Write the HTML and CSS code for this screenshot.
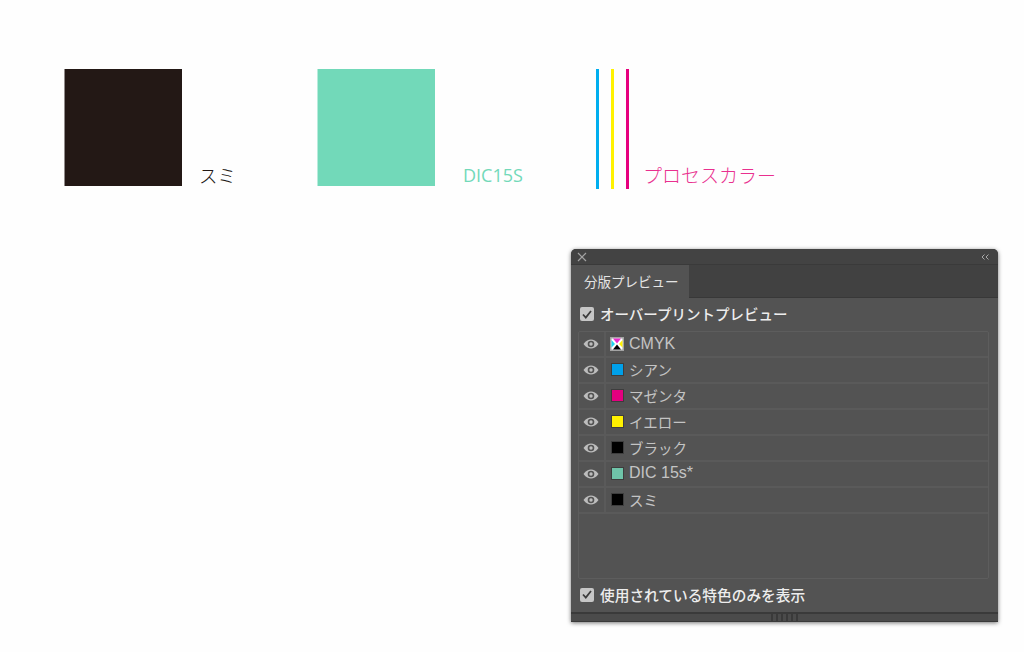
FILE: index.html
```html
<!DOCTYPE html>
<html lang="ja">
<head>
    <meta charset="UTF-8">
    <title>分版プレビュー</title>
    <link rel="stylesheet" href="styles.css">
</head>
<body>
    <div class="artboard">
        <div class="sample sample-sumi">
            <div class="square square-sumi"></div>
            <span class="sample-label label-sumi">スミ</span>
        </div>
        <div class="sample sample-dic">
            <div class="square square-dic"></div>
            <span class="sample-label label-dic">DIC15S</span>
        </div>
        <div class="sample sample-process">
            <div class="lines">
                <div class="line line-c"></div>
                <div class="line line-y"></div>
                <div class="line line-m"></div>
            </div>
            <span class="sample-label label-process">プロセスカラー</span>
        </div>
    </div>

    <div class="panel">
        <div class="title-bar">
            <svg class="close-icon" width="10" height="10" viewBox="0 0 10 10"><path d="M1 1l8 8M9 1l-8 8" stroke="#a2a2a2" stroke-width="1.200" fill="none"/></svg>
            <svg class="collapse-icon" width="8" height="6" viewBox="0 0 8 6"><path d="M3.500.5L1 3l2.500 2.500M7.500.5L5 3l2.500 2.500" stroke="#a8a8a8" stroke-width="1" fill="none"/></svg>
        </div>
        <div class="tab-bar">
            <div class="tab">分版プレビュー</div>
        </div>
        <div class="panel-body">
            <label class="check-row">
                <span class="checkbox"><svg width="10" height="9" viewBox="0 0 10 9"><path d="M1 4.500l2.800 3L9 1" stroke="#3c3c3c" stroke-width="1.800" fill="none"/></svg></span>
                <span class="check-text">オーバープリントプレビュー</span>
            </label>
            <div class="plate-list">
                <div class="plate-row">
                    <div class="eye-cell"><svg class="eye" width="16" height="10" viewBox="0 0 16 10"><path d="M.5 5C3 1.500 5.500.5 8 .5s5 1 7.500 4.500C13 8.500 10.500 9.500 8 9.500S3 8.500.5 5z" fill="#bdbdbd"/><circle cx="8" cy="5" r="3.300" fill="#535353"/><circle cx="8" cy="5" r="1.700" fill="#bdbdbd"/></svg></div>
                    <div class="plate-name plate-name-latin plate-name-cmyk">
                        <svg class="cmyk-icon" width="14" height="14" viewBox="0 0 14 14"><rect width="14" height="14" fill="#a3a3a3"/><rect x="1.500" y="1.500" width="11" height="11" fill="#fff"/><path d="M3 1.500h8L7 6.500z" fill="#ec2bd0"/><path d="M1.500 3v7.500L5 7z" fill="#1fd6ef"/><path d="M12.500 3v7.500L9 7z" fill="#fff200"/><path d="M3 12.500h8L7 7.500z" fill="#000"/></svg>
                        CMYK
                    </div>
                </div>
                <div class="plate-row">
                    <div class="eye-cell"><svg class="eye" width="16" height="10" viewBox="0 0 16 10"><path d="M.5 5C3 1.500 5.500.5 8 .5s5 1 7.500 4.500C13 8.500 10.500 9.500 8 9.500S3 8.500.5 5z" fill="#bdbdbd"/><circle cx="8" cy="5" r="3.300" fill="#535353"/><circle cx="8" cy="5" r="1.700" fill="#bdbdbd"/></svg></div>
                    <div class="plate-name"><span class="chip chip-c"></span>シアン</div>
                </div>
                <div class="plate-row">
                    <div class="eye-cell"><svg class="eye" width="16" height="10" viewBox="0 0 16 10"><path d="M.5 5C3 1.500 5.500.5 8 .5s5 1 7.500 4.500C13 8.500 10.500 9.500 8 9.500S3 8.500.5 5z" fill="#bdbdbd"/><circle cx="8" cy="5" r="3.300" fill="#535353"/><circle cx="8" cy="5" r="1.700" fill="#bdbdbd"/></svg></div>
                    <div class="plate-name"><span class="chip chip-m"></span>マゼンタ</div>
                </div>
                <div class="plate-row">
                    <div class="eye-cell"><svg class="eye" width="16" height="10" viewBox="0 0 16 10"><path d="M.5 5C3 1.500 5.500.5 8 .5s5 1 7.500 4.500C13 8.500 10.500 9.500 8 9.500S3 8.500.5 5z" fill="#bdbdbd"/><circle cx="8" cy="5" r="3.300" fill="#535353"/><circle cx="8" cy="5" r="1.700" fill="#bdbdbd"/></svg></div>
                    <div class="plate-name"><span class="chip chip-y"></span>イエロー</div>
                </div>
                <div class="plate-row">
                    <div class="eye-cell"><svg class="eye" width="16" height="10" viewBox="0 0 16 10"><path d="M.5 5C3 1.500 5.500.5 8 .5s5 1 7.500 4.500C13 8.500 10.500 9.500 8 9.500S3 8.500.5 5z" fill="#bdbdbd"/><circle cx="8" cy="5" r="3.300" fill="#535353"/><circle cx="8" cy="5" r="1.700" fill="#bdbdbd"/></svg></div>
                    <div class="plate-name"><span class="chip chip-k"></span>ブラック</div>
                </div>
                <div class="plate-row">
                    <div class="eye-cell"><svg class="eye" width="16" height="10" viewBox="0 0 16 10"><path d="M.5 5C3 1.500 5.500.5 8 .5s5 1 7.500 4.500C13 8.500 10.500 9.500 8 9.500S3 8.500.5 5z" fill="#bdbdbd"/><circle cx="8" cy="5" r="3.300" fill="#535353"/><circle cx="8" cy="5" r="1.700" fill="#bdbdbd"/></svg></div>
                    <div class="plate-name plate-name-latin"><span class="chip chip-dic"></span>DIC 15s*</div>
                </div>
                <div class="plate-row">
                    <div class="eye-cell"><svg class="eye" width="16" height="10" viewBox="0 0 16 10"><path d="M.5 5C3 1.500 5.500.5 8 .5s5 1 7.500 4.500C13 8.500 10.500 9.500 8 9.500S3 8.500.5 5z" fill="#bdbdbd"/><circle cx="8" cy="5" r="3.300" fill="#535353"/><circle cx="8" cy="5" r="1.700" fill="#bdbdbd"/></svg></div>
                    <div class="plate-name"><span class="chip chip-k"></span>スミ</div>
                </div>
            </div>
            <label class="check-row check-row-bottom">
                <span class="checkbox"><svg width="10" height="9" viewBox="0 0 10 9"><path d="M1 4.500l2.800 3L9 1" stroke="#3c3c3c" stroke-width="1.800" fill="none"/></svg></span>
                使用されている特色のみを表示
            </label>
        </div>
        <div class="resize-bar"><div class="grip"></div></div>
    </div>
</body>
</html>
```

FILE: styles.css
```css
* {
    margin: 0;
    padding: 0;
    box-sizing: border-box;
}

body {
    width: 1024px;
    height: 652px;
    overflow: hidden;
    background: #fefefe;
    font-family: "Noto Sans CJK JP", "Noto Sans", sans-serif;
}

/* Artwork */
.artboard {
    display: flex;
    height: 249px;
    padding: 69px 0 0 65px;
}

.sample {
    display: flex;
    align-items: flex-start;
}

.sample-sumi {
    width: 253px;
}

.sample-dic {
    width: 278px;
}

.square {
    width: 117px;
    height: 117px;
}

.square-sumi {
    background: #231815;
    box-shadow: -1px 0 0 rgba(35, 24, 21, 0.5);
}

.square-dic {
    background: #72d9b9;
    box-shadow: -1px 0 0 rgba(114, 217, 185, 0.5);
}

.sample-label {
    font-size: 18.500px;
    font-weight: 300;
    line-height: 24px;
    margin-top: 94px;
    white-space: nowrap;
}

.label-sumi {
    margin-left: 17px;
    color: #231815;
}

.label-dic {
    margin-left: 28px;
    color: #72d9b9;
    font-family: "Open Sans", sans-serif;
    font-size: 18px;
    font-weight: 400;
}

.label-process {
    margin-left: 14px;
    color: #e9308f;
    font-size: 19px;
}

.lines {
    display: flex;
    gap: 12px;
}

.line {
    width: 3px;
    height: 120px;
}

.line-c {
    background: #00aeef;
}

.line-y {
    background: #fff200;
}

.line-m {
    background: #e6007e;
}

/* Panel */
.panel {
    width: 427px;
    height: 373px;
    margin-left: 571px;
    display: flex;
    flex-direction: column;
    background: #535353;
    border-radius: 5px 5px 0 0;
    box-shadow: 0 1px 4px rgba(0, 0, 0, 0.55);
    overflow: hidden;
}

.title-bar {
    height: 16px;
    display: flex;
    align-items: center;
    justify-content: space-between;
    padding: 0 9px 0 6px;
    background: #434343;
    border-bottom: 1px solid #3a3a3a;
    flex-shrink: 0;
}

.tab-bar {
    height: 33px;
    background: #414141;
    border-bottom: 1px solid #383838;
    flex-shrink: 0;
}

.tab {
    width: 118px;
    height: 33px;
    padding-left: 13px;
    background: #535353;
    color: #e4e4e4;
    font-size: 13.500px;
    line-height: 32px;
}

.panel-body {
    flex: 1;
    padding: 0 9px 0 7px;
}

.check-row {
    display: flex;
    align-items: center;
    gap: 6px;
    height: 33px;
    padding-bottom: 1px;
    color: #ededed;
    font-size: 14.500px;
    font-weight: 500;
    white-space: nowrap;
}

.check-text {
    margin-bottom: 2px;
}

.check-row-bottom {
    padding-bottom: 2px;
    font-size: 14.700px;
}

.checkbox {
    width: 14px;
    height: 14px;
    margin-left: 2px;
    display: flex;
    align-items: center;
    justify-content: center;
    background: #c6c6c6;
    border-radius: 2px;
}

.plate-list {
    height: 248px;
    border: 1px solid #5d5d5d;
    border-radius: 2px;
}

.plate-row {
    display: flex;
    height: 26px;
    border-bottom: 2px solid #5a5a5a;
}

.eye-cell {
    width: 27px;
    padding-right: 1px;
    display: flex;
    align-items: center;
    justify-content: center;
    border-right: 2px solid #5a5a5a;
}

.plate-name {
    display: flex;
    align-items: center;
    gap: 5px;
    padding: 0 0 2px 5px;
    color: #c4c4c4;
    font-size: 14.500px;
    white-space: nowrap;
}

.plate-name-latin {
    font-family: "Liberation Sans", sans-serif;
    font-size: 16px;
}

.plate-name-cmyk {
    padding: 0 0 0 4px;
}

.chip {
    width: 13px;
    height: 13px;
    border: 1px solid #3d3d3d;
}

.chip-c {
    background: #00a0e9;
}

.chip-m {
    background: #e4007f;
}

.chip-y {
    background: #fff100;
}

.chip-k {
    background: #000;
}

.chip-dic {
    background: #6fc4a9;
}

.resize-bar {
    height: 10px;
    display: flex;
    justify-content: center;
    align-items: center;
    background: #4b4b4b;
    border-top: 2px solid #3a3a3a;
    border-bottom: 1px solid #3a3a3a;
    flex-shrink: 0;
}

.grip {
    width: 27px;
    height: 7px;
    background: repeating-linear-gradient(90deg, #3a3a3a 0 2px, #4b4b4b 2px 5px);
}
```
